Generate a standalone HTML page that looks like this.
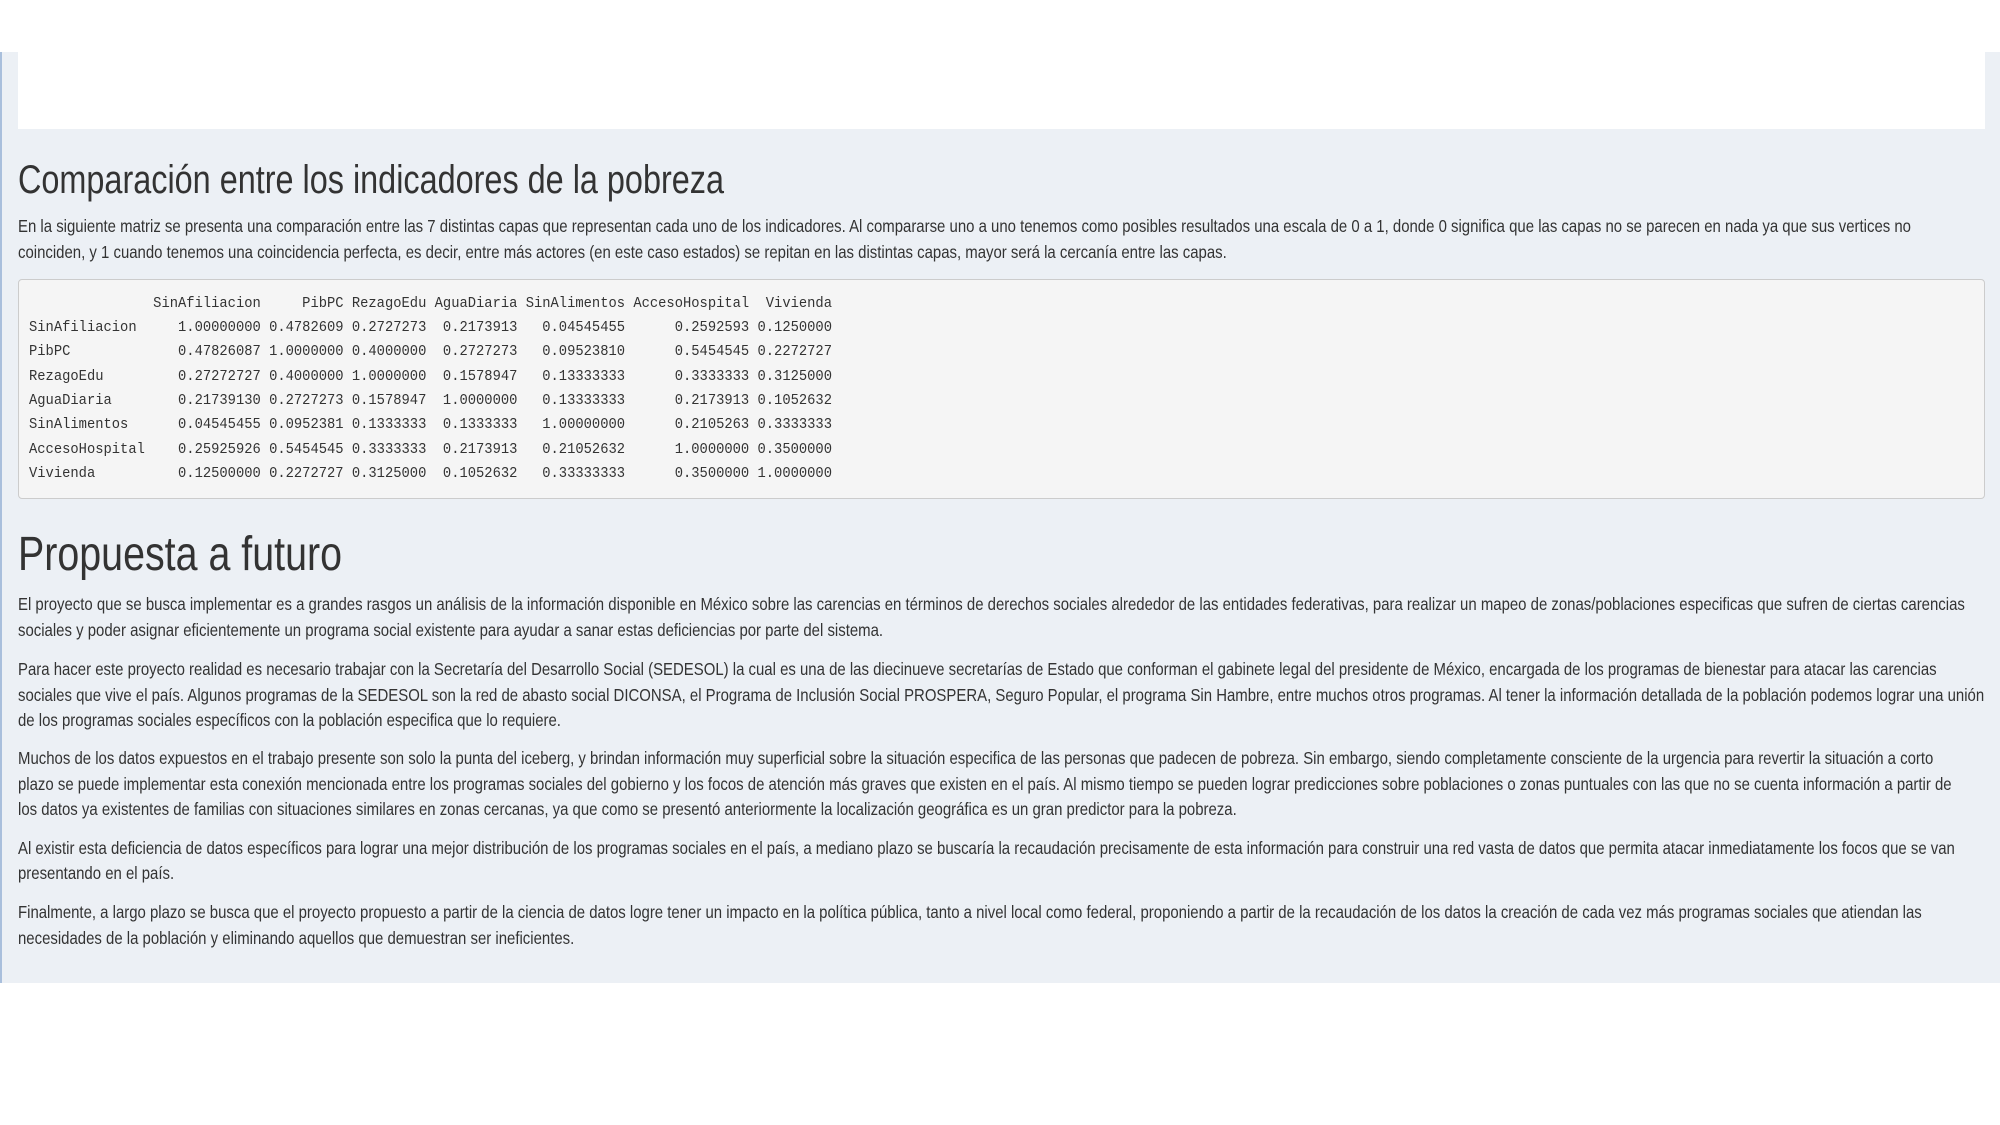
<!DOCTYPE html>
<html><head><meta charset="utf-8">
<style>
html,body{margin:0;padding:0;width:2000px;height:1125px;overflow:hidden;background:#fff;position:relative}
#bg{position:absolute;left:0;top:52px;width:2000px;height:931px;background:#ecf0f5;border-left:2px solid #a9bfdc;box-sizing:border-box}
#box{position:absolute;left:18px;top:52px;width:1967px;height:77px;background:#fff}
.t{position:absolute;left:18px;white-space:nowrap;font-family:"Liberation Sans",sans-serif;font-size:17.5px;line-height:25px;color:#333;transform-origin:0 50%}
.h{position:absolute;left:18px;white-space:nowrap;font-family:"Liberation Sans",sans-serif;color:#333;transform-origin:0 50%;line-height:1}
#pre{position:absolute;left:18px;top:279px;width:1967px;height:220px;background:#f5f5f5;border:1px solid #ccc;border-radius:4px;box-sizing:border-box}
.m{position:absolute;left:29px;white-space:pre;font-family:"Liberation Mono",monospace;font-size:14.5px;line-height:20px;color:#333}
</style></head><body>
<div id="bg"></div>
<div id="box"></div>
<div class="h" id="h1" style="top:160px;font-size:40px">Comparación entre los indicadores de la pobreza</div>
<div class="t" id="ref" style="top:214px">En la siguiente matriz se presenta una comparación entre las 7 distintas capas que representan cada uno de los indicadores. Al compararse uno a uno tenemos como posibles resultados una escala de 0 a 1, donde 0 significa que las capas no se parecen en nada ya que sus vertices no</div>
<div class="t" style="top:240px">coinciden, y 1 cuando tenemos una coincidencia perfecta, es decir, entre más actores (en este caso estados) se repitan en las distintas capas, mayor será la cercanía entre las capas.</div>
<div id="pre"></div>
<div class="m" style="top:294px">               SinAfiliacion     PibPC RezagoEdu AguaDiaria SinAlimentos AccesoHospital  Vivienda</div>
<div class="m" style="top:318px">SinAfiliacion     1.00000000 0.4782609 0.2727273  0.2173913   0.04545455      0.2592593 0.1250000</div>
<div class="m" style="top:342px">PibPC             0.47826087 1.0000000 0.4000000  0.2727273   0.09523810      0.5454545 0.2272727</div>
<div class="m" style="top:367px">RezagoEdu         0.27272727 0.4000000 1.0000000  0.1578947   0.13333333      0.3333333 0.3125000</div>
<div class="m" style="top:391px">AguaDiaria        0.21739130 0.2727273 0.1578947  1.0000000   0.13333333      0.2173913 0.1052632</div>
<div class="m" style="top:415px">SinAlimentos      0.04545455 0.0952381 0.1333333  0.1333333   1.00000000      0.2105263 0.3333333</div>
<div class="m" style="top:440px">AccesoHospital    0.25925926 0.5454545 0.3333333  0.2173913   0.21052632      1.0000000 0.3500000</div>
<div class="m" style="top:464px">Vivienda          0.12500000 0.2272727 0.3125000  0.1052632   0.33333333      0.3500000 1.0000000</div>
<div class="h" id="h2" style="top:531px;font-size:48px">Propuesta a futuro</div>
<div class="t" style="top:592px">El proyecto que se busca implementar es a grandes rasgos un análisis de la información disponible en México sobre las carencias en términos de derechos sociales alrededor de las entidades federativas, para realizar un mapeo de zonas/poblaciones especificas que sufren de ciertas carencias</div>
<div class="t" style="top:618px">sociales y poder asignar eficientemente un programa social existente para ayudar a sanar estas deficiencias por parte del sistema.</div>
<div class="t" style="top:657px">Para hacer este proyecto realidad es necesario trabajar con la Secretaría del Desarrollo Social (SEDESOL) la cual es una de las diecinueve secretarías de Estado que conforman el gabinete legal del presidente de México, encargada de los programas de bienestar para atacar las carencias</div>
<div class="t" style="top:683px">sociales que vive el país. Algunos programas de la SEDESOL son la red de abasto social DICONSA, el Programa de Inclusión Social PROSPERA, Seguro Popular, el programa Sin Hambre, entre muchos otros programas. Al tener la información detallada de la población podemos lograr una unión</div>
<div class="t" style="top:708px">de los programas sociales específicos con la población especifica que lo requiere.</div>
<div class="t" style="top:746px">Muchos de los datos expuestos en el trabajo presente son solo la punta del iceberg, y brindan información muy superficial sobre la situación especifica de las personas que padecen de pobreza. Sin embargo, siendo completamente consciente de la urgencia para revertir la situación a corto</div>
<div class="t" style="top:772px">plazo se puede implementar esta conexión mencionada entre los programas sociales del gobierno y los focos de atención más graves que existen en el país. Al mismo tiempo se pueden lograr predicciones sobre poblaciones o zonas puntuales con las que no se cuenta información a partir de</div>
<div class="t" style="top:797px">los datos ya existentes de familias con situaciones similares en zonas cercanas, ya que como se presentó anteriormente la localización geográfica es un gran predictor para la pobreza.</div>
<div class="t" style="top:836px">Al existir esta deficiencia de datos específicos para lograr una mejor distribución de los programas sociales en el país, a mediano plazo se buscaría la recaudación precisamente de esta información para construir una red vasta de datos que permita atacar inmediatamente los focos que se van</div>
<div class="t" style="top:861px">presentando en el país.</div>
<div class="t" style="top:900px">Finalmente, a largo plazo se busca que el proyecto propuesto a partir de la ciencia de datos logre tener un impacto en la política pública, tanto a nivel local como federal, proponiendo a partir de la recaudación de los datos la creación de cada vez más programas sociales que atiendan las</div>
<div class="t" style="top:926px">necesidades de la población y eliminando aquellos que demuestran ser ineficientes.</div>
<script>
(function(){
var r=document.getElementById('ref');var s=1893/r.getBoundingClientRect().width;
var ts=document.querySelectorAll('.t');for(var i=0;i<ts.length;i++)ts[i].style.transform='scaleX('+s+')';
function fit(id,w){var e=document.getElementById(id);e.style.transform='scaleX('+(w/e.getBoundingClientRect().width)+')';}
fit('h1',706);fit('h2',324);
var ms=document.querySelectorAll('.m');var mw=ms[0].getBoundingClientRect().width;var ms2=803/mw;
for(var j=0;j<ms.length;j++){ms[j].style.transformOrigin='0 50%';ms[j].style.transform='scaleX('+ms2+')';}
})();
</script>
</body></html>
